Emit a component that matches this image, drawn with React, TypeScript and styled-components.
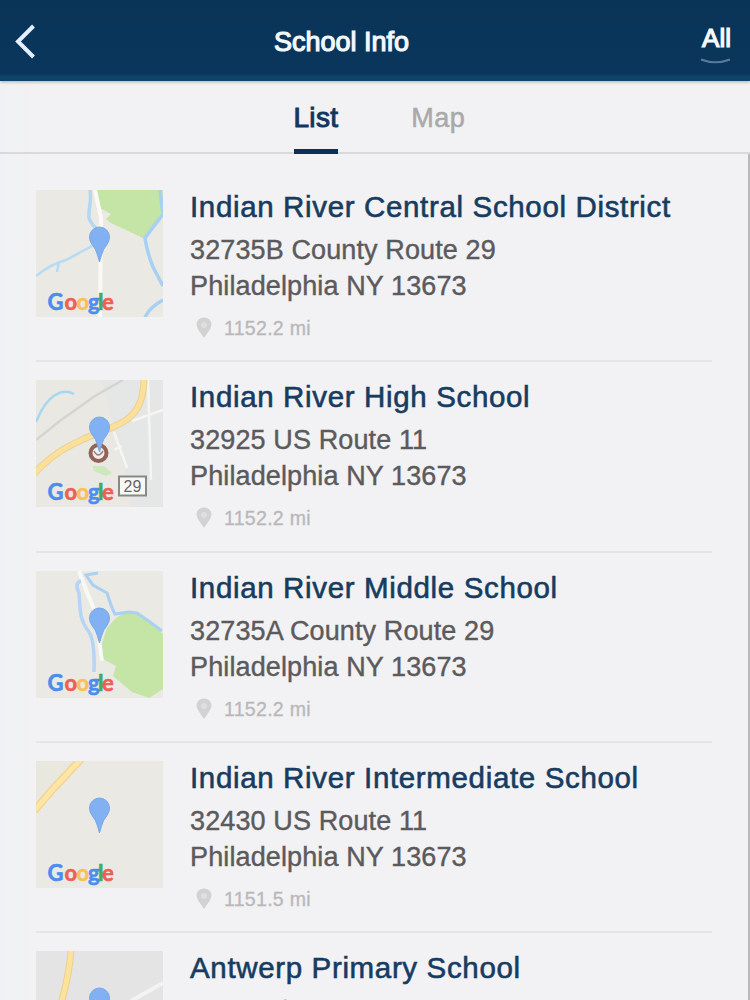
import React from "react";
import styled, { createGlobalStyle } from "styled-components";

const GlobalStyle = createGlobalStyle`
  * {
    box-sizing: border-box;
  }

  body {
    margin: 0;
    background-color: #f2f1f3;
    font-family: "Liberation Sans", Arial, sans-serif;
    overflow: hidden;
  }
`;

const Screen = styled.div`
  width: 750px;
  height: 1000px;
  overflow: hidden;
  display: flex;
  flex-direction: column;
  background: linear-gradient(to right, #eff2f4, #f2f1f3 36px);
`;

const Header = styled.header`
  display: grid;
  grid-template-columns: 100px 1fr 100px;
  flex: none;
  height: 81px;
  background: linear-gradient(#093457, #0a365d 74px, #0e4269 76px, #0f446b);
  box-shadow: 0 1px 3px rgba(60, 80, 60, 0.4);
  color: #f2f8ff;
  z-index: 1;
`;

const BackButton = styled.button`
  display: flex;
  padding: 24px 0 0 15px;
  border: none;
  background: none;
  color: #e4efff;
`;

const Title = styled.h1`
  margin: 0;
  padding-right: 67px;
  text-align: center;
  font-size: 27px;
  font-weight: 400;
  line-height: 84px;
  -webkit-text-stroke: 1.2px currentColor;
`;

const FilterButton = styled.button`
  display: flex;
  flex-direction: column;
  align-items: flex-end;
  padding: 23px 19px 0 0;
  border: none;
  background: none;
  color: #f6faff;
  font: 400 26px/30px "Liberation Sans", Arial, sans-serif;
  -webkit-text-stroke: 1.2px currentColor;

  svg {
    margin-top: 5px;
  }
`;

const Tabs = styled.nav`
  display: flex;
  flex: none;
  gap: 73px;
  height: 73px;
  padding-left: 293.5px;
  border-bottom: 2px solid #d9d8db;
`;

const Tab = styled.div<{ $active?: boolean }>`
  height: 73px;
  border-bottom: 5px solid ${(p) => (p.$active ? "#07305a" : "transparent")};
  color: ${(p) => (p.$active ? "#12365f" : "#a9a9ab")};
  font-size: ${(p) => (p.$active ? "28px" : "27px")};
  letter-spacing: ${(p) => (p.$active ? "0.3px" : "0.5px")};
  line-height: 74px;
  -webkit-text-stroke: ${(p) => (p.$active ? "1px" : "0.5px")} currentColor;
`;

const List = styled.main`
  flex: 1;
  min-height: 0;
  overflow: hidden;
  padding: 18px 36px 0;
  border-right: 2px solid #b9b8bb;
`;

const Row = styled.article`
  display: flex;
  gap: 27px;
  height: 190.3px;
  padding-top: 18px;
  border-bottom: 2px solid #e5e4e7;
`;

const Thumb = styled.svg`
  flex: none;
  width: 127px;
  height: 127px;
`;

const Info = styled.div`
  white-space: nowrap;
`;

const Name = styled.h2`
  margin: 0;
  color: #163c61;
  font-size: 29.5px;
  font-weight: 400;
  letter-spacing: 0.65px;
  line-height: 33px;
  -webkit-text-stroke: 0.6px currentColor;
`;

const Address = styled.p`
  margin: 9px 0 0;
  color: #5b5a5c;
  font-size: 27px;
  letter-spacing: 0.12px;
  line-height: 36px;
  -webkit-text-stroke: 0.4px currentColor;
`;

const Distance = styled.div`
  display: flex;
  align-items: center;
  gap: 12px;
  margin-top: 12px;
  padding-left: 6px;
  color: #b8b8ba;
  font-size: 19.5px;
  letter-spacing: 0.3px;
  line-height: 24px;
  -webkit-text-stroke: 0.3px currentColor;
`;

const schools = [
  {
    name: "Indian River Central School District",
    street: "32735B County Route 29",
    city: "Philadelphia NY 13673",
    distance: "1152.2 mi",
    map: "district",
  },
  {
    name: "Indian River High School",
    street: "32925 US Route 11",
    city: "Philadelphia NY 13673",
    distance: "1152.2 mi",
    map: "high",
  },
  {
    name: "Indian River Middle School",
    street: "32735A County Route 29",
    city: "Philadelphia NY 13673",
    distance: "1152.2 mi",
    map: "middle",
  },
  {
    name: "Indian River Intermediate School",
    street: "32430 US Route 11",
    city: "Philadelphia NY 13673",
    distance: "1151.5 mi",
    map: "intermediate",
  },
  {
    name: "Antwerp Primary School",
    street: "64 Academy Street PO Box 10",
    map: "primary",
  },
];

const terrain: Record<string, React.ReactNode> = {
  district: (
    <>
      <path d="M60 0 L64 18 L75 24 L70 29 L75 33 L109 49 L127 26 V0Z" fill="#c4e5a5" />
      <path d="M59 0 L65 28 L64 127" stroke="#faf9f5" strokeWidth="4" />
      <path d="M54 0 C56 12 52 20 53 28 Q55 34 61 39" stroke="#b2d8f4" strokeWidth="3.5" />
      <path d="M0 86 Q15 74 30 70 L56 56 M23 72 L21 82" stroke="#b7dbf3" strokeWidth="2.5" />
      <path d="M124 0 L127 24 L109 48 Q111 62 117 77 L127 96 M109 127 Q114 117 127 110" stroke="#a6d0f5" strokeWidth="3.5" />
    </>
  ),
  high: (
    <>
      <path d="M65 0 H127 V127 H95 L82 60Z" fill="#e5e6e6" />
      <path d="M0 60 L25 40 L59 16 L87 0" stroke="#d5d4d1" strokeWidth="2.5" />
      <path d="M0 42 Q8 22 19 15 Q29 9 38 14" stroke="#a7d7ef" strokeWidth="2.5" />
      <path d="M78 52 L91 88 M78 70 L86 66 M96 41 L127 30 M112 0 L115 100" stroke="#f5f5f2" strokeWidth="2.5" />
      <path d="M56 86 L68 86 L76 93 L70 96 L58 91Z" fill="#cee8bd" />
      <path d="M-2 94 C18 72 35 65 50 58 L77 47 C100 38 108 23 108 -2" stroke="#edcf96" strokeWidth="7" />
      <path d="M-2 94 C18 72 35 65 50 58 L77 47 C100 38 108 23 108 -2" stroke="#fbe09b" strokeWidth="5" />
    </>
  ),
  middle: (
    <>
      <path d="M80 47 L91 40 L101 43 L112 50 L127 63 V118 L113 127 L96 121 L77 105 L80 95 L67 88 L66 72 L71 57Z" fill="#c4e5a5" />
      <path d="M43 0 L50 19 L58 38 M63 70 L66 90" stroke="#f8f8f5" strokeWidth="4" />
      <path d="M45 10 Q38 12 43 22 C44 40 44 50 53 61 Q59 70 58 101" stroke="#b6d4f3" strokeWidth="3.5" />
      <path d="M62 2 L50 4 L57 14 L71 22 Q76 38 79 43 L93 41 L101 42 L114 51 L126 60" stroke="#a9d1f4" strokeWidth="3" />
    </>
  ),
  intermediate: (
    <>
      <path d="M0 0 H38 L0 41Z" fill="#e8e8df" />
      <path d="M-2 50 L18 27 L46 -3" stroke="#f2d398" strokeWidth="8" />
      <path d="M-2 50 L18 27 L46 -3" stroke="#fde6a4" strokeWidth="5" />
    </>
  ),
  primary: (
    <>
      <path d="M35 -2 Q34 22 23 60" stroke="#ead193" strokeWidth="7" />
      <path d="M35 -2 Q34 22 23 60" stroke="#fde29b" strokeWidth="5" />
      <path d="M95 50 L127 32" stroke="#f3f3f3" strokeWidth="4" />
    </>
  ),
};

const landColors: Record<string, string> = {
  high: "#eae8e2",
  primary: "#e4e4e5",
};

const googleLetters = [
  { letter: "G", x: 11.5, color: "#4a8df0" },
  { letter: "o", x: 28.5, color: "#ef5e55" },
  { letter: "o", x: 40.5, color: "#f8c257" },
  { letter: "g", x: 52, color: "#4a8df0" },
  { letter: "l", x: 62, color: "#3eac68" },
  { letter: "e", x: 66, color: "#ef5e55" },
];

const GoogleMark = () => (
  <g fontFamily="Lato, sans-serif" fontSize="22" fontWeight="700">
    {googleLetters.map(({ letter, x, color }, i) => (
      <text key={i} x={x} y="119.5" fill={color} stroke={color} strokeWidth="0.6">
        {letter}
      </text>
    ))}
  </g>
);

const MapThumb = ({ map }: { map: string }) => (
  <Thumb viewBox="0 0 127 127" fill="none">
    <rect width="127" height="127" fill={landColors[map] ?? "#ebe9e3"} />
    {terrain[map]}
    {map === "high" && (
      <>
        <circle cx="62.5" cy="73" r="8" fill="#f3eeee" stroke="#926358" strokeWidth="4" />
        <path d="M58 71 Q62 79 67 71" stroke="#9f7d76" strokeWidth="1.5" />
        <rect x="83" y="96.5" width="27" height="19" fill="#f8f8f5" stroke="#888886" strokeWidth="2" />
        <text x="96.5" y="112" textAnchor="middle" fontSize="16" fill="#666">
          29
        </text>
      </>
    )}
    <path
      d="M63.5 72 L61.5 65 Q60 59 56 54.5 Q53.5 51 53.5 47 A10 10 0 0 1 73.5 47 Q73.5 51 71 54.5 Q67 59 65.5 65Z"
      fill="#81b1f3"
      stroke="#7aa8e6"
      strokeWidth="1"
    />
    {map !== "primary" && <GoogleMark />}
  </Thumb>
);

const PinIcon = () => (
  <svg width="16" height="22" viewBox="0 0 16 22">
    <path d="M8 21 L2.5 13 Q0.5 10 0.5 7.5 A7.5 7 0 0 1 15.5 7.5 Q15.5 10 13.5 13Z" fill="#d2d2d3" />
    <circle cx="8" cy="8" r="3" fill="#dfdfe0" />
  </svg>
);

const App = () => {
  return (
    <>
      <GlobalStyle />
      <Screen>
        <Header>
          <BackButton aria-label="Back">
            <svg width="21" height="35" viewBox="0 0 21 35" fill="none">
              <path d="M18.5 2 L3 17.5 L18.5 33" stroke="currentColor" strokeWidth="4" />
            </svg>
          </BackButton>
          <Title>School Info</Title>
          <FilterButton>
            All
            <svg width="31" height="7" viewBox="0 0 31 7" fill="none">
              <path d="M1 1.5 Q15.5 7 30 1.5" stroke="#577b9c" strokeWidth="2.2" />
            </svg>
          </FilterButton>
        </Header>
        <Tabs>
          <Tab $active>List</Tab>
          <Tab>Map</Tab>
        </Tabs>
        <List>
          {schools.map((school) => (
            <Row key={school.name}>
              <MapThumb map={school.map} />
              <Info>
                <Name>{school.name}</Name>
                <Address>
                  {school.street}
                  <br />
                  {school.city}
                </Address>
                {school.distance && (
                  <Distance>
                    <PinIcon />
                    {school.distance}
                  </Distance>
                )}
              </Info>
            </Row>
          ))}
        </List>
      </Screen>
    </>
  );
};

export default App;
